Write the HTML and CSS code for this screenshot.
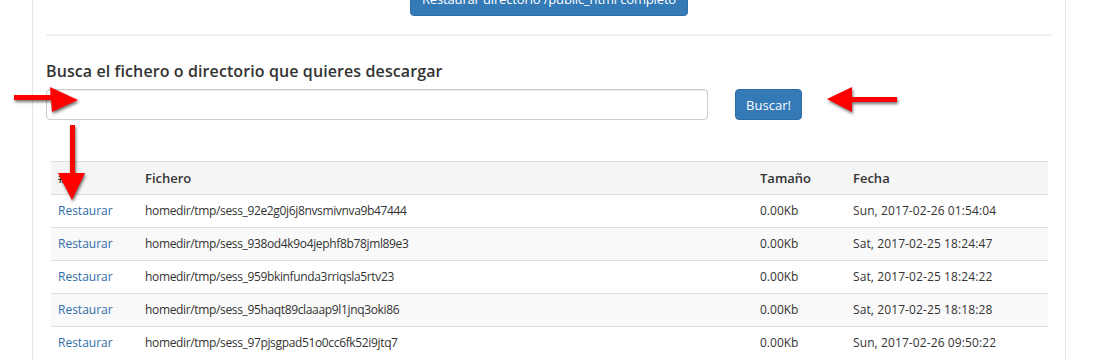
FILE: index.html
```html
<!DOCTYPE html>
<html>
<head>
  <title>Restaurar ficheros</title>
  <link rel="stylesheet" href="styles.css">
</head>
<body>
  <div class="panel">
    <div class="top-actions">
      <button class="btn btn-wide">Restaurar directorio /public_html completo</button>
    </div>
    <hr class="divider">

    <h4 class="search-title">Busca el fichero o directorio que quieres descargar</h4>
    <div class="search-row">
      <input type="text" class="search-input">
      <button class="btn btn-search">Buscar!</button>
    </div>

    <table class="files">
      <thead>
        <tr>
          <th class="col-action">#</th>
          <th>Fichero</th>
          <th class="col-size">Tamaño</th>
          <th class="col-date">Fecha</th>
        </tr>
      </thead>
      <tbody>
        <tr>
          <td><a href="#">Restaurar</a></td>
          <td class="path">homedir/tmp/sess_92e2g0j6j8nvsmivnva9b47444</td>
          <td>0.00Kb</td>
          <td class="date">Sun, 2017-02-26 01:54:04</td>
        </tr>
        <tr>
          <td><a href="#">Restaurar</a></td>
          <td class="path">homedir/tmp/sess_938od4k9o4jephf8b78jml89e3</td>
          <td>0.00Kb</td>
          <td class="date">Sat, 2017-02-25 18:24:47</td>
        </tr>
        <tr>
          <td><a href="#">Restaurar</a></td>
          <td class="path">homedir/tmp/sess_959bkinfunda3rriqsla5rtv23</td>
          <td>0.00Kb</td>
          <td class="date">Sat, 2017-02-25 18:24:22</td>
        </tr>
        <tr>
          <td><a href="#">Restaurar</a></td>
          <td class="path">homedir/tmp/sess_95haqt89claaap9l1jnq3oki86</td>
          <td>0.00Kb</td>
          <td class="date">Sat, 2017-02-25 18:18:28</td>
        </tr>
        <tr>
          <td><a href="#">Restaurar</a></td>
          <td class="path">homedir/tmp/sess_97pjsgpad51o0cc6fk52i9jtq7</td>
          <td>0.00Kb</td>
          <td class="date">Sun, 2017-02-26 09:50:22</td>
        </tr>
      </tbody>
    </table>
  </div>

  <!-- red arrows drawn over the screenshot -->
  <svg class="arrows" width="1100" height="360" viewBox="0 0 1100 360">
    <g class="arrow">
      <rect x="14" y="95" width="40" height="5"/>
      <polygon points="50,87 78,100 52,112"/>
    </g>
    <g class="arrow">
      <rect x="849" y="97" width="48" height="5"/>
      <polygon points="827,99 852,87 852,112"/>
    </g>
    <g class="arrow">
      <rect x="70" y="125" width="5" height="52"/>
      <polygon points="58,173 85,173 72,200"/>
    </g>
  </svg>
</body>
</html>
```

FILE: styles.css
```css
body {
  font-family: "Open Sans", "Liberation Sans", sans-serif;
  font-size: 13px;
  color: #333;
  margin: 0;
  padding: 0;
  background: #fff;
  overflow: hidden;
}
.panel {
  margin-left: 32px;
  width: 1006px;
  height: 400px;
  padding: 0 13px 0 13px;
  border-left: 1px solid #e6e6e6;
  border-right: 1px solid #e6e6e6;
}
.top-actions {
  display: flex;
  justify-content: center;
  height: 16px;
}
.btn {
  font-family: "Open Sans", "Liberation Sans", sans-serif;
  font-size: 13px;
  color: #fff;
  background: #337ab7;
  border: 1px solid #2e6da4;
  border-radius: 4px;
  cursor: pointer;
}
.btn-wide {
  flex: none;
  width: 278px;
  height: 34px;
  margin-top: -18px;
  padding: 0 6px;
  letter-spacing: -0.15px;
  line-height: 20px;
  white-space: nowrap;
}
.divider {
  border: 0;
  border-top: 2px solid #f2f2f2;
  margin: 18px 0 0 0;
}
.search-title {
  font-family: "Open Sans", "Liberation Sans", sans-serif;
  font-weight: 600;
  font-size: 16px;
  letter-spacing: 0.1px;
  color: #333;
  margin: 25px 0 0 0;
  line-height: 20px;
}
.search-row {
  display: flex;
  align-items: center;
  gap: 27px;
  margin-top: 8px;
}
.search-input {
  width: 662px;
  height: 31px;
  box-sizing: border-box;
  border: 1px solid #ccc;
  border-radius: 4px;
  box-shadow: inset 0 1px 1px rgba(0, 0, 0, 0.075);
  margin: 0;
}
.btn-search {
  width: 67px;
  height: 31px;
  padding: 0;
}
.files {
  border-collapse: collapse;
  width: 997px;
  margin: 41px 0 0 5px;
}
.files th,
.files td {
  text-align: left;
  padding: 8px 7px;
  line-height: 16px;
  border-top: 1px solid #ddd;
  white-space: nowrap;
}
.files th {
  font-weight: 600;
  background: #f5f5f5;
  border-bottom: 1px solid #ddd;
}
.files td {
  font-size: 12px;
}
.files td.path {
  letter-spacing: -0.35px;
}
.files td.date {
  letter-spacing: 0.1px;
}
.files tbody tr:nth-child(even) {
  background: #f9f9f9;
}
.col-action {
  width: 73px;
}
.col-size {
  width: 79px;
}
.col-date {
  width: 188px;
}
.files a {
  color: #2f6ea8;
  text-decoration: none;
}
.arrows {
  position: absolute;
  top: 0;
  left: 0;
  pointer-events: none;
}
.arrow {
  fill: #ff0000;
  filter: drop-shadow(1px 2px 1.5px rgba(0, 0, 0, 0.55));
}
```
